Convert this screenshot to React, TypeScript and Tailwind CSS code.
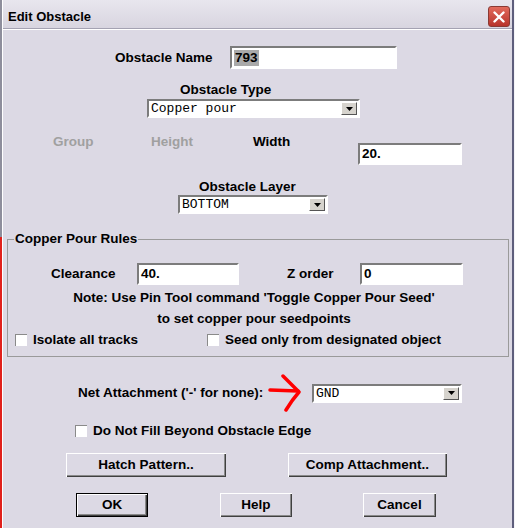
import React from 'react';

const sans = "font-['Liberation_Sans',Arial,sans-serif]";
const base = `${sans} font-bold text-[13.5px] leading-[16px] whitespace-nowrap`;
const label = `${base} text-black`;
const dimmed = `${base} text-[#a0a0a0]`;
const sunken = 'border-2 border-t-[#7c7c7c] border-l-[#7c7c7c] border-r-white border-b-white';
const raised = 'shadow-[inset_1px_1px_0_#ffffff,inset_-1px_-1px_0_#404040,inset_-2px_-2px_0_#8a8a8a]';

interface BoxProps {
  className?: string;
  value: string;
  selected?: boolean;
}

const TextBox: React.FC<BoxProps> = ({ className = '', value, selected = false }) => (
  <div className={`flex items-center bg-white pl-[2px] ${sunken} ${className}`}>
    <span className={`${label} ${selected ? 'bg-[#a9a9a9] px-[1px]' : ''}`}>{value}</span>
  </div>
);

const DropDown: React.FC<BoxProps> = ({ className = '', value }) => (
  <div className={`flex items-center bg-white ${sunken} ${className}`}>
    <span className="flex-1 pl-[2px] font-['Liberation_Mono','Courier_New',monospace] text-[13px] leading-[15px] text-black">
      {value}
    </span>
    <div className="flex items-center justify-center w-[16px] h-[13px] mr-[1px] bg-[#d6d3cd] border border-t-white border-l-white border-r-[#555] border-b-[#555]">
      <svg width="7" height="4" viewBox="0 0 7 4">
        <path d="M0 0h7L3.5 4z" fill="#000" />
      </svg>
    </div>
  </div>
);

const Check = () => (
  <span className="w-[12px] h-[12px] shrink-0 bg-white border-t border-l border-[#8a8a8a]" />
);

interface ButtonProps {
  className?: string;
  isDefault?: boolean;
  children: React.ReactNode;
}

const Button: React.FC<ButtonProps> = ({ className = '', isDefault = false, children }) => (
  <div
    className={`flex items-center justify-center ${label} bg-[#dcd9e4] ${raised} ${
      isDefault ? 'border border-black' : ''
    } ${className}`}
  >
    {children}
  </div>
);

const CloseIcon = () => (
  <svg width="12" height="12" viewBox="0 0 12 12">
    <path d="M1.5 1.5l9 9M10.5 1.5l-9 9" stroke="#fff" strokeWidth="2.4" strokeLinecap="round" />
  </svg>
);

// hand-drawn pointer next to the net field
const RedArrow = () => (
  <svg width="44" height="38" viewBox="0 0 44 38" className="shrink-0">
    <path d="M2 16 L30 17" stroke="#ff0000" strokeWidth="3.5" strokeLinecap="round" fill="none" />
    <path d="M15 2 Q23 10 31 18 Q24 26 18 36" stroke="#ff0000" strokeWidth="3.5" strokeLinecap="round" strokeLinejoin="round" fill="none" />
  </svg>
);

const App: React.FC = () => {
  return (
    <div className="w-[515px] h-[528px] flex bg-[#dcd9e4] overflow-hidden">
      {/* left window frame */}
      <div className="w-[2px] shrink-0 flex flex-col">
        <div className="h-[237px] bg-[#8e8e9c]" />
        <div className="flex-1 bg-[#e0201c]" />
      </div>
      <div className="w-[1px] shrink-0 bg-white" />

      <div className="flex-1 flex flex-col">
        {/* title bar */}
        <div className="h-[28px] flex items-start bg-gradient-to-b from-[#e8e6ee] to-[#d8d5e0]">
          <span className={`${sans} font-bold text-[13px] leading-[16px] text-black mt-[9px] ml-[5px]`}>
            Edit Obstacle
          </span>
          <div className="ml-auto mr-[2px] mt-[6px] w-[22px] h-[21px] rounded-[3px] flex items-center justify-center bg-gradient-to-b from-[#e26a5c] to-[#b8322a] border border-[#8a3a34]">
            <CloseIcon />
          </div>
        </div>
        <div className="h-[1px] bg-[#a4a2b2]" />
        <div className="h-[1px] bg-white" />

        {/* obstacle name */}
        <div className="mt-[16px] h-[23px] flex items-center">
          <div className={`${label} ml-[112px] w-[115px]`}>Obstacle Name</div>
          <TextBox className="w-[167px] h-full" value="793" selected />
        </div>

        {/* obstacle type */}
        <div className={`${label} mt-[13px] ml-[177px]`}>Obstacle Type</div>
        <div className="mt-[1px] h-[19px] flex">
          <DropDown className="ml-[144px] w-[213px] h-full" value="Copper pour" />
        </div>

        {/* group / height / width */}
        <div className="mt-[16px] h-[31px] flex items-start">
          <div className={`${dimmed} ml-[50px] w-[98px]`}>Group</div>
          <div className={`${dimmed} w-[102px]`}>Height</div>
          <div className={`${label} w-[105px]`}>Width</div>
          <TextBox className="mt-[9px] w-[104px] h-[22px]" value="20." />
        </div>

        {/* layer */}
        <div className={`${label} mt-[14px] ml-[196px]`}>Obstacle Layer</div>
        <div className="h-[19px] flex">
          <DropDown className="ml-[175px] w-[150px] h-full" value="BOTTOM" />
        </div>

        {/* copper pour rules */}
        <fieldset className="mt-[17px] ml-[4px] w-[502px] border border-[#9a9a9a] p-0 pb-[8px]">
          <legend className={`${label} ml-[6px] px-[1px]`}>Copper Pour Rules</legend>
          <div className="mt-[16px] h-[22px] flex items-center">
            <div className={`${label} ml-[43px] w-[86px]`}>Clearance</div>
            <TextBox className="w-[102px] h-full" value="40." />
            <div className={`${label} ml-[48px] w-[73px]`}>Z order</div>
            <TextBox className="w-[103px] h-full" value="0" />
          </div>
          <div className={`${label} mt-[2px] pr-[8px] text-center leading-[21px]`}>
            <div>Note: Use Pin Tool command 'Toggle Copper Pour Seed'</div>
            <div>to set copper pour seedpoints</div>
          </div>
          <div className="mt-[3px] h-[16px] flex items-center">
            <div className="ml-[7px] w-[192px] flex items-center gap-[6px]">
              <Check />
              <span className={label}>Isolate all tracks</span>
            </div>
            <div className="flex items-center gap-[6px]">
              <Check />
              <span className={label}>Seed only from designated object</span>
            </div>
          </div>
        </fieldset>

        {/* net attachment */}
        <div className="mt-[17px] h-[38px] flex items-center">
          <div className={`${label} ml-[75px] w-[190px]`}>Net Attachment ('-' for none):</div>
          <RedArrow />
          <DropDown className="w-[150px] h-[19px]" value="GND" />
        </div>

        <div className="mt-[11px] h-[16px] flex items-center gap-[6px]">
          <span className="ml-[72px] flex">
            <Check />
          </span>
          <span className={label}>Do Not Fill Beyond Obstacle Edge</span>
        </div>

        {/* buttons */}
        <div className="mt-[14px] h-[24px] flex">
          <Button className="ml-[63px] w-[160px]">Hatch Pattern..</Button>
          <Button className="ml-[62px] w-[159px]">Comp Attachment..</Button>
        </div>
        <div className="mt-[16px] h-[24px] flex">
          <Button className="ml-[73px] w-[72px]" isDefault>
            OK
          </Button>
          <Button className="ml-[72px] w-[72px]">Help</Button>
          <Button className="ml-[71px] w-[73px]">Cancel</Button>
        </div>
      </div>

      {/* right window frame */}
      <div className="w-[2px] shrink-0 bg-[#5e5e7c]" />
      <div className="w-[1px] shrink-0 bg-[#f4f4f8]" />
    </div>
  );
};

export default App;
